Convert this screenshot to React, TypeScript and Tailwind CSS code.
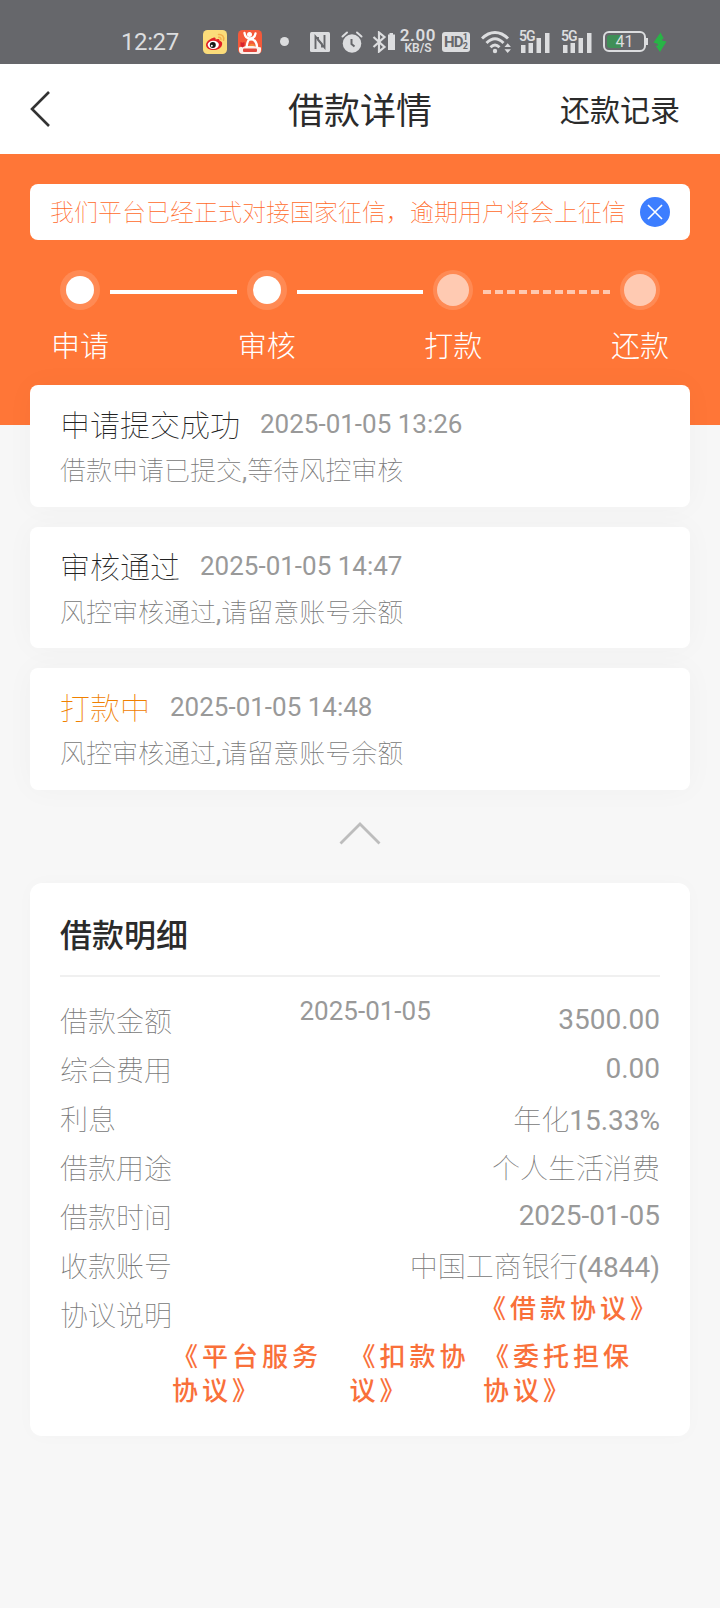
import React from 'react';

const steps = [
  { label: '申请', done: true },
  { label: '审核', done: true },
  { label: '打款', done: false },
  { label: '还款', done: false },
];

const records = [
  { title: '申请提交成功', time: '2025-01-05 13:26', text: '借款申请已提交,等待风控审核', active: false },
  { title: '审核通过', time: '2025-01-05 14:47', text: '风控审核通过,请留意账号余额', active: false },
  { title: '打款中', time: '2025-01-05 14:48', text: '风控审核通过,请留意账号余额', active: true },
];

const details = [
  { label: '借款金额', value: '3500.00' },
  { label: '综合费用', value: '0.00' },
  { label: '利息', value: '年化15.33%' },
  { label: '借款用途', value: '个人生活消费' },
  { label: '借款时间', value: '2025-01-05' },
  { label: '收款账号', value: '中国工商银行(4844)' },
];

// Latin runs are set in a regular weight next to the thin Chinese glyphs
const Mixed: React.FC<{ text: string }> = ({ text }) => (
  <>
    {text.split(/([\d.,%()-]+)/).map((part, i) => (
      <span key={i} className={i % 2 ? 'font-normal text-[#999]' : ''}>{part}</span>
    ))}
  </>
);

const Signal: React.FC<{ className?: string }> = ({ className }) => (
  <div className={`relative w-[32px] h-[24px] ${className ?? ''}`}>
    <svg viewBox="0 0 32 24" className="w-full h-full" fill="#dcdddf">
      <rect x="2" y="15" width="4.5" height="8" />
      <rect x="9.5" y="13" width="4.5" height="10" />
      <rect x="17.5" y="8" width="4.5" height="15" />
      <rect x="26" y="3" width="4.5" height="20" />
    </svg>
    <span className="absolute left-0 top-0 text-[14px] leading-[13px] font-semibold bg-[#66676b] h-[13px] w-[16px] tracking-[-1px]">5G</span>
  </div>
);

const StatusBar: React.FC = () => (
  <div className="h-[64px] bg-[#66676b] text-[#dcdddf] flex items-center pt-[19px] pl-[121px]">
    <span className="w-[82px] text-[24px] leading-[24px] tracking-[-0.4px]">12:27</span>
    <svg viewBox="0 0 24 24" className="w-[24px] h-[24px] mr-[11px]">
      <rect width="24" height="24" rx="4.5" fill="#fbdc7a" />
      <path d="M10 8c2-1 3 0 2.500 1.500 2.500-1 4.500-.5 4 1.300 2 .5 3 1.800 2.600 3.600C18.500 18 14.500 20 10.500 20S3 18 3 15c0-3 4-6.500 7-7z" fill="#e01f26" />
      <ellipse cx="10.300" cy="14.800" rx="5.600" ry="4.100" fill="#fff" />
      <circle cx="9.800" cy="15" r="3" fill="#171717" />
      <circle cx="8.800" cy="15.800" r="1" fill="#fff" />
      <path d="M15.500 4.500c3.500-.5 6 2.200 5 5.800M15.700 7.300c1.700-.2 2.600 1 2.200 2.500" fill="none" stroke="#f3b04d" strokeWidth="1.500" strokeLinecap="round" />
    </svg>
    <svg viewBox="0 0 24 24" className="w-[24px] h-[24px] mr-[18px]">
      <rect width="24" height="24" rx="4.500" fill="#f4593a" />
      <path d="M1 17.500c6-2 16-2 22 0V20a4 4 0 0 1-4 4H5a4 4 0 0 1-4-4z" fill="#fdf0ea" />
      <circle cx="11.500" cy="4.500" r="2.500" fill="#fff" />
      <path d="M6.500 3c.5 3.500 2.500 5.500 5.500 5.500S17 6.500 17.500 3.500M11 9c-1.500 2.500-2 4.500-2.500 8M12 9.500c4.500-.5 6.500 2.500 7 7" fill="none" stroke="#fff" strokeWidth="2.300" strokeLinecap="round" />
      <path d="M2.500 12l2 .8 2-.8v4l-2 1.500-2-1.500z" fill="#d8232f" />
      <path d="M11 16c1-3 5-3 6 0z" fill="#f4893a" />
      <rect x="5" y="18.500" width="14" height="3.500" rx="1" fill="#e2473c" />
    </svg>
    <span className="w-[9px] h-[9px] rounded-full bg-[#dcdddf] mr-[21px]" />
    <svg viewBox="0 0 20 20" className="w-[20px] h-[20px] mr-[11px]">
      <rect width="20" height="20" rx="1.500" fill="#dcdddf" />
      <path d="M5.500 17V4.500L12 12v3.500M14.500 3v12.500L8 8V5" fill="none" stroke="#66676b" strokeWidth="1.900" />
    </svg>
    <svg viewBox="0 0 22 22" className="w-[22px] h-[22px] mr-[9px]">
      <circle cx="11" cy="12.500" r="9.300" fill="#dcdddf" />
      <path d="M1.500 5.500L6 1.500M20.500 5.500L16 1.500" stroke="#dcdddf" strokeWidth="2" strokeLinecap="round" />
      <path d="M10.500 8v5l3 2.500" fill="none" stroke="#66676b" strokeWidth="2" />
    </svg>
    <svg viewBox="0 0 24 22" className="w-[24px] h-[22px] mr-[4px]">
      <path d="M1.500 6l11 10L7 20.500v-19L12.500 6l-11 10" fill="none" stroke="#dcdddf" strokeWidth="2.200" />
      <path d="M17.500 2h3.500v1.500h2V19h-7V3.500h1.500z" fill="#dcdddf" />
    </svg>
    <div className="w-[36px] flex flex-col items-center mr-[6px] mt-[-1px]">
      <span className="text-[17px] leading-[14px] h-[14px] font-semibold tracking-[0.6px]">2.00</span>
      <span className="text-[12px] leading-[12px] h-[12px] font-semibold">KB/S</span>
    </div>
    <div className="w-[28px] h-[20px] rounded-[3px] bg-[#dcdddf] text-[#66676b] flex items-center justify-center mr-[11px]">
      <span className="text-[15px] leading-[20px] font-bold tracking-[-0.8px]">HD</span>
      <span className="text-[9px] leading-[9px] font-bold flex flex-col"><i className="not-italic">1</i><i className="not-italic">2</i></span>
    </div>
    <svg viewBox="0 0 31 24" className="w-[31px] h-[24px] mr-[7px]" fill="none" stroke="#dcdddf">
      <path d="M1 8.500c8-8 18-8 26 0M5.500 13c5.500-5.500 11.500-5.500 17 0M9.500 17.200c3-3 6-3 9 0" strokeWidth="2.900" />
      <circle cx="14" cy="21" r="2.200" fill="#dcdddf" stroke="none" />
      <path d="M23.500 17l3.200-3.800 3.200 3.800zM23.500 19.300l3.200 3.700 3.200-3.700z" fill="#dcdddf" stroke="none" />
    </svg>
    <Signal className="mr-[10px]" />
    <Signal className="mr-[10px]" />
    <div className="relative w-[43px] h-[21px] rounded-[6px] border-2 border-[#dcdddf] p-[2px] mr-[7px]">
      <div className="w-[14px] h-full rounded-l-[3px] bg-[#3f8f57]" />
      <span className="absolute inset-0 text-center text-[16px] leading-[18px]">41</span>
      <span className="absolute -right-[4px] top-[5px] w-[2px] h-[7px] bg-[#dcdddf]" />
    </div>
    <svg viewBox="0 0 14 20" className="w-[14px] h-[20px]">
      <path d="M7.500 0.500L0.500 10.500l4.500 1.500-.5 2-2-.5 4.500 6.500 6.500-10.500-4.500-1 .5-2 1.500.5z" fill="#28b446" />
    </svg>
  </div>
);

const App: React.FC = () => {
  return (
    <div className="w-[720px] h-[1608px] overflow-hidden bg-[#f7f7f7] font-[Roboto,'Noto_Sans_CJK_SC',sans-serif]">
      <StatusBar />

      <header className="h-[90px] bg-white text-[#2b2b2b] grid grid-cols-3 items-center pl-[30px] pr-[40px]">
        <svg viewBox="0 0 20 36" className="w-[20px] h-[36px]">
          <path d="M19 1L2 18l17 17" fill="none" stroke="#333" strokeWidth="2.600" />
        </svg>
        <h1 className="text-[36px] leading-[40px] text-center whitespace-nowrap pl-[10px] pt-[5px]">借款详情</h1>
        <span className="text-[30px] leading-[40px] text-right pt-[4px]">还款记录</span>
      </header>

      <div className="h-[271px] bg-[#ff7637] px-[30px] pt-[30px]">
        <div className="h-[56px] rounded-[8px] bg-white flex items-center justify-between pl-[20px] pr-[20px]">
          <span className="text-[24px] font-thin text-[#ff6a2a] whitespace-nowrap pt-px">我们平台已经正式对接国家征信，逾期用户将会上征信</span>
          <svg viewBox="0 0 30 30" className="w-[30px] h-[30px] shrink-0">
            <circle cx="15" cy="15" r="15" fill="#3d7eff" />
            <path d="M8 8l14 14M22 8L8 22" stroke="#fff" strokeWidth="1.600" />
          </svg>
        </div>

        <div className="flex items-center pl-[30px] mt-[29.500px]">
          {steps.map((step, i) => (
            <React.Fragment key={step.label}>
              <div className="w-[40px] h-[40px] rounded-full bg-white/15 flex items-center justify-center shrink-0">
                <div className={step.done ? 'w-[28px] h-[28px] rounded-full bg-white' : 'w-[32px] h-[32px] rounded-full bg-[#ffcab2]'} />
              </div>
              {i < 2 && <div className="w-[126.600px] h-[4px] bg-white mx-[10px] mt-[5px] shrink-0" />}
              {i === 2 && (
                <div className="w-[126.600px] h-[4px] mx-[10px] mt-[5px] flex gap-[4px] overflow-hidden shrink-0">
                  {Array.from({ length: 11 }).map((_, n) => (
                    <i key={n} className="w-[8px] h-full bg-[#ffc8af] shrink-0" />
                  ))}
                </div>
              )}
            </React.Fragment>
          ))}
        </div>
        <div className="flex justify-between px-[20px] mt-[17.500px]">
          {steps.map((step) => (
            <span key={step.label} className="w-[60px] text-center text-[29px] leading-[40px] font-light text-white">{step.label}</span>
          ))}
        </div>
      </div>

      <main className="relative px-[30px] -mt-[40px]">
        <div className="flex flex-col gap-[20px]">
          {records.map((item) => (
            <div key={item.time} className="h-[121.500px] rounded-[8px] bg-white px-[30px] pt-[20px] shadow-[0_0_30px_rgba(0,0,0,0.03)]">
              <div className="flex items-start h-[40px]">
                <span className={`text-[30px] leading-[41px] font-thin ${item.active ? 'text-[#f08000]' : 'text-[#222]'}`}>{item.title}</span>
                <span className="ml-[20px] text-[26px] leading-[39px] text-[#999]">{item.time}</span>
              </div>
              <p className="mt-[6px] text-[26px] leading-[40px] font-thin text-[#777]"><Mixed text={item.text} /></p>
            </div>
          ))}
        </div>

        <svg viewBox="0 0 42 24" className="w-[42px] h-[24px] mx-auto mt-[31px]">
          <path d="M1.500 22.500L21 3l19.500 19.500" fill="none" stroke="#bdbdbd" strokeWidth="2.800" />
        </svg>

        <section className="mt-[38px] h-[553.500px] rounded-[12px] bg-white px-[30px] shadow-[0_0_20px_rgba(0,0,0,0.02)]">
          <h2 className="h-[94px] border-b-2 border-[#f0f0f0] pt-[33px] text-[32px] leading-[40px] font-medium text-[#2b2b2b]">借款明细</h2>
          <div className="relative pt-[21px] text-[28px] leading-[49px] font-thin text-[#777]">
            <span className="absolute left-[239.500px] top-[10px] text-[26px] font-normal text-[#999]">2025-01-05</span>
            {details.map((row) => (
              <div key={row.label} className="flex justify-between h-[49px]">
                <span>{row.label}</span>
                <span className={/^[\d.-]+$/.test(row.value) ? '-mt-[3px]' : ''}><Mixed text={row.value} /></span>
              </div>
            ))}
            <div className="flex justify-between h-[49px]">
              <span>协议说明</span>
              <a className="text-[26px] leading-[34px] font-medium tracking-[4px] text-[#f9703a]">《借款协议》</a>
            </div>
          </div>
          <div className="flex ml-[112px] -mt-px text-[26px] leading-[34px] font-medium tracking-[4px] text-[#f9703a]">
            <a className="w-[177.500px] pr-[20px]">《平台服务协议》</a>
            <a className="w-[133.500px] pr-[10px]">《扣款协议》</a>
            <a className="w-[177px] pr-[20px]">《委托担保协议》</a>
          </div>
        </section>
      </main>
    </div>
  );
};

export default App;
